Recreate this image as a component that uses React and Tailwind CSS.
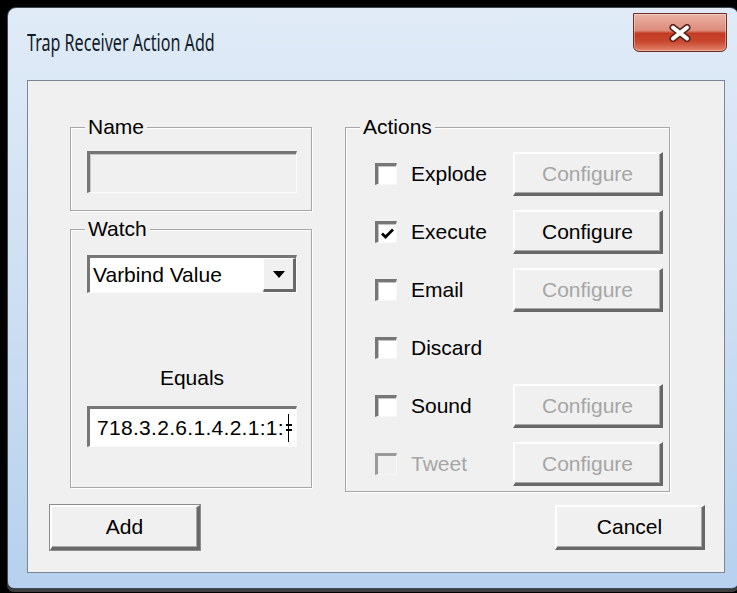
import React from "react";

// Win7-style frame around a classic dialog body
function GroupBox({ label, className = "", children }) {
  return (
    <div
      className={`relative border border-[#a7a7a7] shadow-[inset_1px_1px_0_#ffffff,1px_1px_0_#ffffff] ${className}`}
    >
      <span className="absolute left-[14px] top-[-14px] bg-[#f0f0f0] px-[3px] leading-[26px]">
        {label}
      </span>
      {children}
    </div>
  );
}

function Button({ children, disabled, isDefault, className = "" }) {
  return (
    <div
      className={`flex items-center justify-center bg-[#f0f0f0] border-t-2 border-l-2 border-t-[#fdfdfd] border-l-[#fdfdfd] border-r-[3px] border-b-[3px] border-r-[#686868] border-b-[#686868] shadow-[inset_-1px_-1px_0_#a8a8a8] ${
        isDefault ? "ring-1 ring-[#8c8c8c]" : ""
      } ${disabled ? "text-[#a6a6a6]" : "text-black"} ${className}`}
    >
      {children}
    </div>
  );
}

function Checkbox({ checked, disabled }) {
  return (
    <div
      className={`w-[22px] h-[22px] shrink-0 border-t-[3px] border-l-[3px] border-r border-b border-r-[#f7f7f7] border-b-[#f7f7f7] flex items-center justify-center ${
        disabled
          ? "border-t-[#9a9a9a] border-l-[#9a9a9a] bg-[#f0f0f0]"
          : "border-t-[#767676] border-l-[#767676] bg-white shadow-[inset_1px_1px_0_#c4c4c4]"
      }`}
    >
      {checked && (
        <svg width="15" height="13" viewBox="0 0 15 13">
          <path d="M2 6.5 L5.5 10 L13 2.5" fill="none" stroke="#000" strokeWidth="2.8" />
        </svg>
      )}
    </div>
  );
}

const actions = [
  { label: "Explode", configure: "disabled" },
  { label: "Execute", checked: true, configure: "enabled" },
  { label: "Email", configure: "disabled" },
  { label: "Discard" },
  { label: "Sound", configure: "disabled" },
  { label: "Tweet", disabled: true, configure: "disabled" },
];

export default function App() {
  return (
    <div className="w-[737px] h-[593px] overflow-hidden bg-black pt-[7px] pl-[7px] font-['Liberation_Sans',Arial,sans-serif] text-[21px] text-black">
      {/* window frame */}
      <div className="relative w-[732px] h-[582px] rounded-t-[9px] rounded-b-[7px] border border-[#3d4a58] bg-gradient-to-b from-[#e0ebf7] via-[#cddff2] to-[#b6d0ee] shadow-[0_3px_0_#3e3e3e]">
        <div className="h-[72px] pl-[19px] pt-[20px]">
          <span className="inline-block origin-left scale-x-[0.7] font-['Noto_Sans',sans-serif] text-[23px] leading-[28px] text-[#111c28]">
            Trap Receiver Action Add
          </span>
        </div>

        {/* close button */}
        <div className="absolute top-[5px] right-[11px] w-[94px] h-[39px] rounded-b-[6px] border border-[#6e2c22] bg-[linear-gradient(#eab3a6_0%,#dc8b7a_45%,#c23c23_52%,#c9472e_75%,#e2866e_100%)] shadow-[inset_0_0_0_1px_rgba(255,255,255,0.35)] flex items-center justify-center">
          <svg width="24" height="18" viewBox="0 0 24 18">
            <path d="M5 3.5 L19 14.5 M19 3.5 L5 14.5" stroke="#5a2119" strokeWidth="7" strokeLinecap="round" />
            <path d="M5 3.5 L19 14.5 M19 3.5 L5 14.5" stroke="#ffffff" strokeWidth="4" strokeLinecap="round" />
          </svg>
        </div>

        {/* client area */}
        <div className="ml-[19px] w-[698px] h-[493px] border border-[#7c8795] bg-[#f0f0f0] pt-[46px]">
          <div className="flex items-start pl-[42px] gap-[33px]">
            <div className="flex flex-col gap-[18px] w-[242px]">
              <GroupBox label="Name" className="h-[84px] pt-[23px] pl-[16px]">
                <div className="w-[210px] h-[42px] bg-[#f0f0f0] border-t-[3px] border-l-[3px] border-t-[#767676] border-l-[#767676] border-r border-b border-r-[#fafafa] border-b-[#fafafa] shadow-[inset_1px_1px_0_#c8c8c8]" />
              </GroupBox>

              <GroupBox label="Watch" className="h-[259px] pt-[25px] pl-[16px]">
                <div className="w-[210px] h-[38px] flex items-center bg-white border-t-[3px] border-l-[3px] border-t-[#767676] border-l-[#767676] border-r border-b border-r-[#fafafa] border-b-[#fafafa]">
                  <span className="flex-1 pl-[3px] leading-[24px]">Varbind Value</span>
                  <div className="w-[33px] h-[34px] flex items-center justify-center bg-[#f0f0f0] border-t border-l border-t-[#fdfdfd] border-l-[#fdfdfd] border-r-[3px] border-b-[3px] border-r-[#686868] border-b-[#686868]">
                    <svg width="12" height="7" viewBox="0 0 12 7">
                      <path d="M0 0 H12 L6 7 Z" fill="#000" />
                    </svg>
                  </div>
                </div>
                <div className="w-[210px] mt-[73px] text-center leading-[24px]">Equals</div>
                <div className="relative w-[210px] h-[41px] mt-[16px] flex items-center overflow-hidden bg-white border-t-[3px] border-l-[3px] border-t-[#767676] border-l-[#767676] border-r border-b border-r-[#fafafa] border-b-[#fafafa]">
                  <span className="pl-[7px] whitespace-nowrap leading-[24px] tracking-[0.3px]">
                    718.3.2.6.1.4.2.1:1:
                  </span>
                  {/* text caret crossing the clipped next glyph */}
                  <span className="absolute left-[198px] top-[5px] w-px h-[28px] bg-black" />
                  <span className="absolute left-[196px] top-[15px] w-[6px] h-[2px] bg-black" />
                  <span className="absolute left-[196px] top-[20px] w-[6px] h-[2px] bg-black" />
                </div>
              </GroupBox>
            </div>

            <GroupBox label="Actions" className="w-[325px] h-[365px] pt-[24px] pl-[29px]">
              <div className="flex flex-col gap-[14px]">
                {actions.map((a) => (
                  <div key={a.label} className="flex items-center h-[44px]">
                    <Checkbox checked={a.checked} disabled={a.disabled} />
                    <span
                      className={`ml-[14px] w-[102px] leading-[24px] ${
                        a.disabled ? "text-[#a6a6a6]" : ""
                      }`}
                    >
                      {a.label}
                    </span>
                    {a.configure && (
                      <Button
                        disabled={a.configure === "disabled"}
                        className="w-[150px] h-[44px]"
                      >
                        Configure
                      </Button>
                    )}
                  </div>
                ))}
              </div>
            </GroupBox>
          </div>

          <div className="flex justify-between mt-[13px] pl-[22px] pr-[19px]">
            <Button isDefault className="w-[150px] h-[45px]">
              Add
            </Button>
            <Button className="w-[150px] h-[45px]">Cancel</Button>
          </div>
        </div>
      </div>
    </div>
  );
}
